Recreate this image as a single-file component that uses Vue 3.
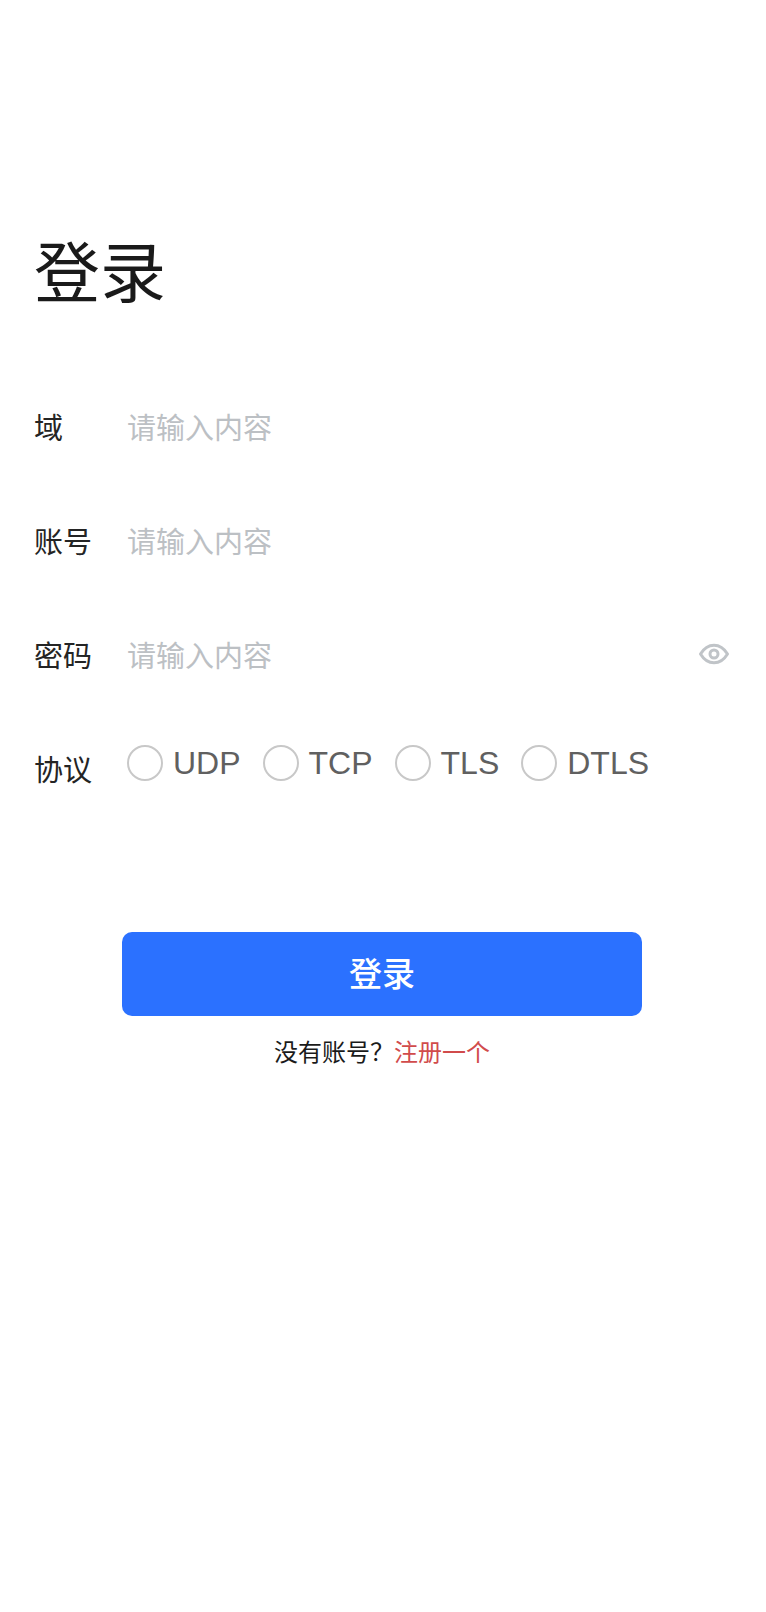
<template>
<main class="login-page">
  <h1 class="title">登录</h1>
  <form @submit.prevent="login">
    <div class="form-row">
      <label for="domain">域</label>
      <input id="domain" v-model="form.domain" class="text-input" type="text" placeholder="请输入内容">
    </div>
    <div class="form-row">
      <label for="account">账号</label>
      <input id="account" v-model="form.account" class="text-input" type="text" placeholder="请输入内容">
    </div>
    <div class="form-row">
      <label for="password">密码</label>
      <input id="password" v-model="form.password" class="text-input" :type="show_password ? 'text' : 'password'" placeholder="请输入内容">
      <button class="eye" type="button" aria-label="显示密码" @click="show_password = !show_password">
        <svg viewBox="0 0 32 24" width="32" height="24" fill="none" stroke="currentColor" stroke-width="3">
          <path d="M2.5 12C6 6.2 10.5 3.2 16 3.2S26 6.2 29.5 12C26 17.8 21.5 20.8 16 20.8S6 17.8 2.5 12Z" stroke-linejoin="round"/>
          <circle cx="16" cy="12" r="4"/>
        </svg>
      </button>
    </div>
    <div class="form-row" role="radiogroup" aria-labelledby="protocol-label">
      <span id="protocol-label" class="row-label">协议</span>
      <div class="radios">
        <label v-for="item in protocols" :key="item" class="radio">
          <input v-model="form.protocol" type="radio" name="protocol" :value="item">
          <span>{{ item }}</span>
        </label>
      </div>
    </div>
    <button class="submit" type="submit">登录</button>
  </form>
  <p class="register">没有账号&#xFF1F;<a href="#register">注册一个</a></p>
</main>
</template>

<script setup>
import {reactive, ref} from 'vue'

const protocols = ['UDP', 'TCP', 'TLS', 'DTLS']

const show_password = ref(false)

const form = reactive({
    domain : '',
    account : '',
    password : '',
    protocol : ''
})

const emits = defineEmits(["login"])

function login(){
    emits("login", {...form})
}
</script>

<style>
body {
  margin: 0;
  background: #fff;
}
</style>

<style scoped>
.login-page {
  box-sizing: border-box;
  min-height: 100vh;
  padding: 234px 36px 40px 34px;
  background: #fff;
  color: #1a1a1a;
  font-family: "Liberation Sans", "Noto Sans CJK SC", sans-serif;
}

.title {
  margin: 0 0 58px;
  font-size: 66px;
  font-weight: 400;
  line-height: 80px;
}

.form-row {
  display: flex;
  align-items: center;
  height: 114px;
}

.form-row > label,
.row-label {
  flex: none;
  width: 93px;
  color: #242424;
  font-size: 29px;
  line-height: 40px;
}

.text-input {
  flex: 1;
  min-width: 0;
  height: 48px;
  padding: 0;
  border: 0;
  outline: none;
  background: transparent;
  color: #242424;
  font-family: inherit;
  font-size: 29px;
}

.text-input::placeholder {
  color: #bcc0c4;
  opacity: 1;
}

.eye {
  display: flex;
  padding: 0 0 6px;
  border: 0;
  background: none;
  color: #c0c4c8;
  cursor: pointer;
}

.radios {
  display: flex;
  gap: 22px;
  padding-bottom: 16px;
}

.radio {
  display: flex;
  align-items: center;
  gap: 10px;
  color: #606060;
  font-size: 32px;
  line-height: 40px;
}

.radio input {
  appearance: none;
  flex: none;
  box-sizing: border-box;
  width: 36px;
  height: 36px;
  margin: 0;
  border: 2px solid #c8c8c8;
  border-radius: 50%;
  background: #fff;
}

.radio input:checked {
  border: 10px solid #2b71ff;
}

.submit {
  display: block;
  width: calc(100% - 176px);
  height: 84px;
  margin: 104px auto 0;
  padding: 0 0 4px;
  border: 0;
  border-radius: 10px;
  background: #2b71ff;
  color: #fff;
  font-family: inherit;
  font-size: 33px;
  font-weight: 500;
  cursor: pointer;
}

.register {
  margin: 19px 0 0;
  font-size: 24px;
  line-height: 36px;
  text-align: center;
}

.register a {
  color: #d14b4b;
  text-decoration: none;
}
</style>
